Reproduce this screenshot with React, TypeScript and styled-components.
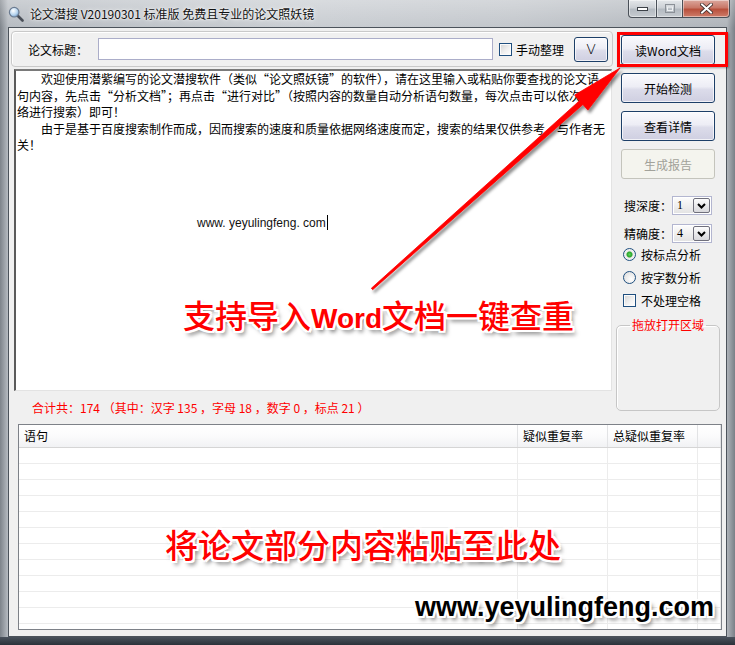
import styled, { createGlobalStyle } from "styled-components";

const UI_FONT = `"Noto Sans CJK SC", "Liberation Sans", sans-serif`;

const GlobalStyle = createGlobalStyle`
  html, body { margin: 0; padding: 0; background: #8a9098; }
  body { font-family: ${UI_FONT}; }
  * { box-sizing: border-box; }
`;

// window chrome
const Frame = styled.div`
  position: relative;
  width: 735px;
  height: 645px;
  padding: 0 8px 8px;
  display: flex;
  flex-direction: column;
  overflow: hidden;
  background:
    linear-gradient(0deg, #2b3139 0, #4a525c 8px, transparent 8px),
    linear-gradient(180deg, rgba(255, 255, 255, 0.3), rgba(255, 255, 255, 0) 28px),
    linear-gradient(90deg, #7d838a 0, #b6bbc1 8px, #c9cdd2 40%, #c2c6cb 70%, #aeb3b9 calc(100% - 8px), #7a8087 100%);
`;

const TitleBar = styled.div`
  flex: none;
  height: 27px;
  display: flex;
  align-items: flex-start;
`;

const AppIcon = styled.svg`
  flex: none;
  margin-top: 6px;
`;

const Caption = styled.span`
  margin: 6px 0 0 6px;
  font-size: 12px;
  line-height: 15px;
  color: #111;
  white-space: nowrap;
  text-shadow: 0 0 5px rgba(255, 255, 255, 0.95), 0 0 2px #fff;
`;

const Controls = styled.div`
  display: flex;
  margin-left: auto;
  margin-right: -3px;
`;

const CtrlBtn = styled.div<{ $w: number; $close?: boolean; $pos?: "first" | "last" }>`
  width: ${(p) => p.$w}px;
  height: 18px;
  border: 1px solid #4a5058;
  border-top: none;
  border-left-width: ${(p) => (p.$pos === "first" ? 1 : 0)}px;
  border-radius: ${(p) =>
    p.$pos === "first" ? "0 0 0 4px" : p.$pos === "last" ? "0 0 4px 0" : "0"};
  display: flex;
  align-items: center;
  justify-content: center;
  box-shadow: inset 0 0 0 1px rgba(255, 255, 255, 0.45);
  background: ${(p) =>
    p.$close
      ? "linear-gradient(180deg, #dba79d 0%, #c97868 45%, #b8503c 55%, #cf7d6a 100%)"
      : "linear-gradient(180deg, #e4e7ea 0%, #ccd0d5 45%, #b4bac1 55%, #c6cbd0 100%)"};
`;

// client area
const Client = styled.div`
  flex: 1;
  min-height: 0;
  background: #f0f0f0;
  border: 1px solid #4c535b;
  display: grid;
  grid-template-columns: 604px 1fr;
  grid-template-rows: 363px 33px minmax(0, 1fr);
  font-size: 12px;
  color: #000;
`;

const LeftCol = styled.div`
  grid-row: 1;
  grid-column: 1;
  display: flex;
  flex-direction: column;
`;

const TitleGroup = styled.div`
  margin: 3px 0 0 2px;
  width: 602px;
  height: 36px;
  border: 1px solid #c9c9c9;
  border-radius: 4px;
  box-shadow: inset 1px 1px 0 #fff;
  display: flex;
  align-items: center;
  padding-left: 16px;
`;

const FieldLabel = styled.span`
  width: 70px;
  flex: none;
  font-size: 12px;
`;

const TitleInput = styled.div`
  width: 395px;
  height: 22px;
  background: #fff;
  border: 1px solid #abadc9;
  flex: none;
`;

const CheckRow = styled.label<{ $ml?: number }>`
  display: flex;
  align-items: center;
  gap: 4px;
  margin-left: ${(p) => p.$ml ?? 0}px;
  font-size: 12px;
  white-space: nowrap;
`;

const CheckBox = styled.span`
  width: 13px;
  height: 13px;
  flex: none;
  border: 1px solid #1f4f7f;
  background: linear-gradient(135deg, #d2d2d2 0%, #f0f0f0 55%, #fff 100%);
  box-shadow: inset 0 0 0 1px #fbfbfb;
`;

const Radio = styled.span<{ $on?: boolean }>`
  width: 13px;
  height: 13px;
  flex: none;
  border-radius: 50%;
  border: 1px solid #1f4f7f;
  background: ${(p) =>
    p.$on
      ? "radial-gradient(circle, #5fd35f 0, #2aa52a 2.5px, #e9e9e9 3.5px, #fff 100%)"
      : "radial-gradient(circle at 65% 65%, #fff 0, #e8e8e8 60%, #d4d4d4 100%)"};
`;

const Button = styled.div<{ $disabled?: boolean; $w?: number; $h?: number }>`
  width: ${(p) => p.$w ?? 94}px;
  height: ${(p) => p.$h ?? 30}px;
  flex: none;
  border: 1px solid ${(p) => (p.$disabled ? "#c4c4bc" : "#1d3f68")};
  border-radius: 3px;
  display: flex;
  align-items: center;
  justify-content: center;
  font-size: 12px;
  color: ${(p) => (p.$disabled ? "#a2a29a" : "#000")};
  background: ${(p) =>
    p.$disabled
      ? "#f4f4ee"
      : "linear-gradient(180deg, #fafafd 0%, #ededf5 45%, #dcdcea 55%, #cfcfe1 100%)"};
  box-shadow: ${(p) => (p.$disabled ? "none" : "inset 0 0 0 1px rgba(255,255,255,0.7)")};
  white-space: nowrap;
`;

const VButton = styled(Button)`
  margin-left: 10px;
  font-family: "DejaVu Sans", sans-serif;
  font-weight: 300;
  font-size: 14px;
`;

const TextArea = styled.div`
  margin: 2px 0 0 5px;
  width: 598px;
  height: 322px;
  background: #fff;
  border-top: 2px solid #7a7a7a;
  border-left: 2px solid #5a5a5a;
  border-right: 1px solid #e3e3e3;
  border-bottom: 1px solid #e3e3e3;
  padding: 0 0 0 1px;
  overflow: hidden;
`;

const Line = styled.div`
  font-size: 12px;
  line-height: 16.5px;
  white-space: nowrap;
`;

const UrlLine = styled.div`
  margin-top: 61px;
  padding-left: 180px;
  font-family: "Liberation Sans", Arial, sans-serif;
  font-size: 12px;
  line-height: 16px;
  display: flex;
  align-items: center;
  color: #111;
`;

const Caret = styled.span`
  width: 1px;
  height: 15px;
  background: #000;
  margin-left: 1px;
`;

const RightCol = styled.div`
  grid-row: 1 / 3;
  grid-column: 2;
  display: flex;
  flex-direction: column;
  padding-left: 3px;
`;

const BtnStack = styled.div`
  margin: 7px 0 0 5px;
  display: flex;
  flex-direction: column;
  gap: 8px;
`;

const Highlight = styled.div`
  position: relative;
  &::after {
    content: "";
    position: absolute;
    top: -3px;
    left: -4px;
    right: -2px;
    bottom: -2px;
    border: 3px solid #f00;
    box-shadow: 1px 1px 2px rgba(0, 0, 0, 0.35);
    pointer-events: none;
  }
`;

const OptRow = styled.div<{ $mt?: number }>`
  display: flex;
  align-items: center;
  margin-top: ${(p) => p.$mt ?? 0}px;
  height: 19px;
  padding-left: 8px;
`;

const OptLabel = styled.span`
  width: 48px;
  flex: none;
`;

const Combo = styled.div`
  width: 40px;
  height: 19px;
  display: flex;
  border: 1px solid #b3b6d0;
  background: #fff;
  padding: 1px;
`;

const ComboValue = styled.div`
  flex: 1;
  background: linear-gradient(180deg, #fbfbfb, #e4e4e4);
  font-family: "Liberation Serif", serif;
  font-size: 12px;
  line-height: 15px;
  padding-left: 3px;
`;

const ComboArrow = styled.div`
  width: 17px;
  border: 1px solid #70707c;
  border-radius: 2px;
  background: linear-gradient(180deg, #fdfdfd, #d8d8dc);
  display: flex;
  align-items: center;
  justify-content: center;
`;

const ChoiceRow = styled.div<{ $mt?: number }>`
  display: flex;
  align-items: center;
  gap: 5px;
  height: 23px;
  padding-left: 7px;
  margin-top: ${(p) => p.$mt ?? 0}px;
  font-size: 12px;
`;

const DropGroup = styled.fieldset`
  margin: 6px 0 0 0;
  width: 104px;
  height: 93px;
  padding: 0;
  border: 1px solid #c6c6c6;
  border-radius: 5px;
  box-shadow: inset 1px 1px 0 #fff;
`;

const DropLegend = styled.legend`
  margin: 0 auto;
  padding: 0 2px;
  color: #f00;
  font-size: 12px;
  line-height: 14px;
`;

const Status = styled.div`
  grid-row: 2;
  grid-column: 1;
  padding-left: 23px;
  line-height: 33px;
  color: #f00;
  font-size: 12px;
  white-space: pre;
`;

// result list
const List = styled.div`
  grid-row: 3;
  grid-column: 1 / 3;
  min-height: 0;
  margin: 0 4px 6px 9px;
  border: 1px solid #7d8188;
  background: #fff;
  overflow: hidden;
`;

const COLS = "499px 90px 90px 1fr";

const HeadRow = styled.div`
  display: grid;
  grid-template-columns: ${COLS};
  height: 23px;
  background: linear-gradient(180deg, #ffffff 0%, #fbfbfc 50%, #f1f2f4 100%);
  border-bottom: 1px solid #d5d5d5;
`;

const HeadCell = styled.div`
  border-right: 1px solid #e2e3e5;
  padding-left: 5px;
  line-height: 22px;
  font-size: 12px;
  white-space: nowrap;
`;

const BodyRow = styled.div`
  display: grid;
  grid-template-columns: ${COLS};
  height: 16px;
  border-bottom: 1px solid #ececec;
`;

const BodyCell = styled.div`
  border-right: 1px solid #ececec;
`;

// annotations drawn over the screenshot
const Overlay = styled.svg`
  position: absolute;
  left: 0;
  top: 0;
  pointer-events: none;
`;

const Callout = styled.div<{ $x: number; $y: number; $size: number }>`
  position: absolute;
  left: ${(p) => p.$x}px;
  top: ${(p) => p.$y}px;
  font-size: ${(p) => p.$size}px;
  line-height: 1;
  white-space: nowrap;
  color: #f00;
  font-family: ${UI_FONT};
  font-weight: 500;
  text-shadow: -2px -2px 0 #fff, 2px -2px 0 #fff, -2px 2px 0 #fff, 2px 2px 0 #fff,
    0 -2px 0 #fff, 0 2px 0 #fff, -2px 0 0 #fff, 2px 0 0 #fff,
    3px 4px 4px rgba(0, 0, 0, 0.55);
`;

const Latin = styled.span<{ $size: number }>`
  font-family: "Liberation Sans", Arial, sans-serif;
  font-weight: 700;
  font-size: ${(p) => p.$size}px;
`;

const Watermark = styled(Callout)`
  color: #000;
  font-family: "Liberation Sans", Arial, sans-serif;
  font-weight: 700;
`;

const bodyRows = Array.from({ length: 12 });

export default function App() {
  return (
    <Frame>
      <GlobalStyle />
      <TitleBar>
        <AppIcon width="16" height="16" viewBox="0 0 16 16">
          <defs>
            <radialGradient id="lens" cx="0.4" cy="0.35" r="0.7">
              <stop offset="0" stopColor="#ffffff" />
              <stop offset="0.6" stopColor="#b9d6f0" />
              <stop offset="1" stopColor="#6d98c4" />
            </radialGradient>
          </defs>
          <line x1="9.5" y1="9.5" x2="14.5" y2="14.5" stroke="#4a4f58" strokeWidth="2.6" strokeLinecap="round" />
          <circle cx="6.2" cy="6.2" r="4.8" fill="url(#lens)" stroke="#6b7b90" strokeWidth="1.2" />
        </AppIcon>
        <Caption>论文潜搜 V20190301 标准版 免费且专业的论文照妖镜</Caption>
        <Controls>
          <CtrlBtn $w={29} $pos="first">
            <svg width="11" height="4" viewBox="0 0 11 4">
              <rect x="0.5" y="0.5" width="10" height="3" fill="#fff" stroke="#3c4148" />
            </svg>
          </CtrlBtn>
          <CtrlBtn $w={26}>
            <svg width="10" height="9" viewBox="0 0 10 9">
              <rect x="0.5" y="0.5" width="9" height="8" fill="none" stroke="#8b9097" />
              <rect x="2.5" y="3" width="5" height="3.5" fill="none" stroke="#eef0f2" />
            </svg>
          </CtrlBtn>
          <CtrlBtn $w={47} $close $pos="last">
            <svg width="13" height="11" viewBox="0 0 13 11">
              <path d="M2 1.5 L11 9.5 M11 1.5 L2 9.5" stroke="#3a2a28" strokeWidth="3.6" strokeLinecap="square" />
              <path d="M2 1.5 L11 9.5 M11 1.5 L2 9.5" stroke="#fff" strokeWidth="2" strokeLinecap="square" />
            </svg>
          </CtrlBtn>
        </Controls>
      </TitleBar>

      <Client>
        <LeftCol>
          <TitleGroup>
            <FieldLabel>论文标题：</FieldLabel>
            <TitleInput />
            <CheckRow $ml={6}>
              <CheckBox />
              手动整理
            </CheckRow>
            <VButton $w={34} $h={25}>V</VButton>
          </TitleGroup>
          <TextArea>
            <Line>　　欢迎使用潜紫编写的论文潜搜软件（类似“论文照妖镜”的软件），请在这里输入或粘贴你要查找的论文语</Line>
            <Line>句内容，先点击“分析文档”；再点击“进行对比”（按照内容的数量自动分析语句数量，每次点击可以依次网</Line>
            <Line>络进行搜索）即可！</Line>
            <Line>　　由于是基于百度搜索制作而成，因而搜索的速度和质量依据网络速度而定，搜索的结果仅供参考，与作者无</Line>
            <Line>关！</Line>
            <UrlLine>
              www. yeyulingfeng. com
              <Caret />
            </UrlLine>
          </TextArea>
        </LeftCol>

        <RightCol>
          <BtnStack>
            <Highlight>
              <Button>读Word文档</Button>
            </Highlight>
            <Button>开始检测</Button>
            <Button>查看详情</Button>
            <Button $disabled>生成报告</Button>
          </BtnStack>
          <OptRow $mt={17}>
            <OptLabel>搜深度：</OptLabel>
            <Combo>
              <ComboValue>1</ComboValue>
              <ComboArrow>
                <svg width="9" height="6" viewBox="0 0 9 6">
                  <path d="M1 1 L4.5 4.5 L8 1" fill="none" stroke="#000" strokeWidth="2" />
                </svg>
              </ComboArrow>
            </Combo>
          </OptRow>
          <OptRow $mt={9}>
            <OptLabel>精确度：</OptLabel>
            <Combo>
              <ComboValue>4</ComboValue>
              <ComboArrow>
                <svg width="9" height="6" viewBox="0 0 9 6">
                  <path d="M1 1 L4.5 4.5 L8 1" fill="none" stroke="#000" strokeWidth="2" />
                </svg>
              </ComboArrow>
            </Combo>
          </OptRow>
          <ChoiceRow>
            <Radio $on />
            按标点分析
          </ChoiceRow>
          <ChoiceRow>
            <Radio />
            按字数分析
          </ChoiceRow>
          <ChoiceRow>
            <CheckBox />
            不处理空格
          </ChoiceRow>
          <DropGroup>
            <DropLegend>拖放打开区域</DropLegend>
          </DropGroup>
        </RightCol>

        <Status>合计共：174 （其中：汉字 135 ，字母 18 ，数字 0 ，标点 21 ）</Status>

        <List>
          <HeadRow>
            <HeadCell>语句</HeadCell>
            <HeadCell>疑似重复率</HeadCell>
            <HeadCell>总疑似重复率</HeadCell>
            <HeadCell />
          </HeadRow>
          {bodyRows.map((_, i) => (
            <BodyRow key={i}>
              <BodyCell />
              <BodyCell />
              <BodyCell />
              <BodyCell />
            </BodyRow>
          ))}
        </List>
      </Client>

      <Overlay width="735" height="645" viewBox="0 0 735 645">
        <defs>
          <filter id="arrowShadow" x="-10%" y="-10%" width="130%" height="130%">
            <feDropShadow dx="2" dy="3" stdDeviation="1.6" floodColor="#000" floodOpacity="0.45" />
          </filter>
        </defs>
        <polygon
          points="372.7,289.7 582.9,104.5 587.9,110.1 620,68 574.6,95.1 579.5,100.7 371.3,288.3"
          fill="#f00"
          stroke="#f00"
          strokeWidth="0.8"
          strokeLinejoin="round"
          filter="url(#arrowShadow)"
        />
      </Overlay>

      <Callout $x={183} $y={298} $size={32}>
        支持导入<Latin $size={28}>Word</Latin>文档一键查重
      </Callout>
      <Callout $x={165} $y={528} $size={33}>
        将论文部分内容粘贴至此处
      </Callout>
      <Watermark $x={415} $y={594} $size={27}>
        www.yeyulingfeng.com
      </Watermark>
    </Frame>
  );
}
